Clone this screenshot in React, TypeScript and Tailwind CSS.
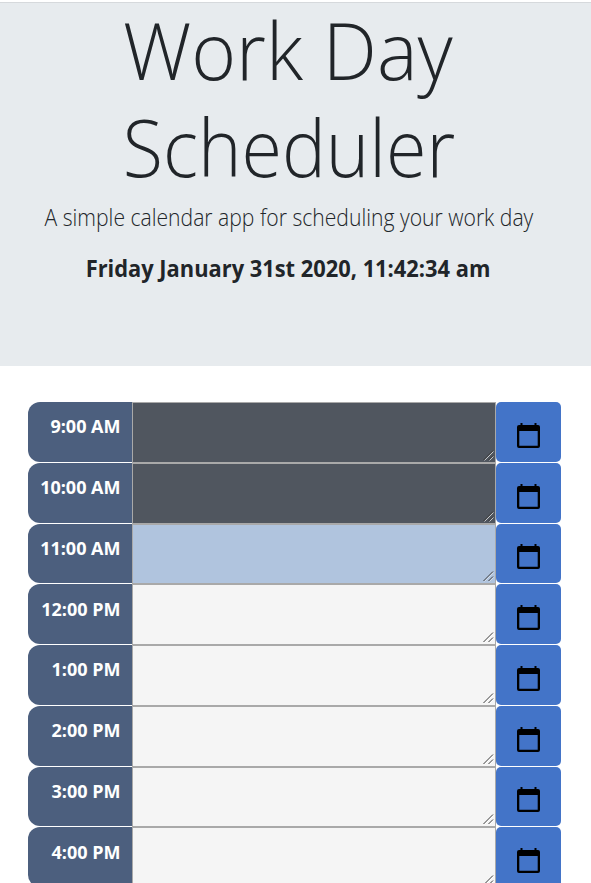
const hours = [
  { label: "9:00 AM", tone: "bg-[#50565f]", glint: "stroke-[#c4c7ca]" },
  { label: "10:00 AM", tone: "bg-[#50565f]", glint: "stroke-[#c4c7ca]" },
  { label: "11:00 AM", tone: "bg-[#b0c4de]", glint: "stroke-[#d4dfed]" },
  { label: "12:00 PM", tone: "bg-[#f5f5f5]", glint: "stroke-white" },
  { label: "1:00 PM", tone: "bg-[#f5f5f5]", glint: "stroke-white" },
  { label: "2:00 PM", tone: "bg-[#f5f5f5]", glint: "stroke-white" },
  { label: "3:00 PM", tone: "bg-[#f5f5f5]", glint: "stroke-white" },
  { label: "4:00 PM", tone: "bg-[#f5f5f5]", glint: "stroke-white" },
];

function CalendarIcon() {
  return (
    <svg width="23" height="25" viewBox="0 0 23 25" className="block">
      <path
        fillRule="evenodd"
        d="M3.5 0h2v2h12V0h2v2h1.5a2 2 0 0 1 2 2v19a2 2 0 0 1-2 2H2a2 2 0 0 1-2-2V4a2 2 0 0 1 2-2h1.5zM2.3 8v14.8h18.4V8z"
      />
    </svg>
  );
}

function TimeBlock({ label, tone, glint }: { label: string; tone: string; glint: string }) {
  return (
    <div className="flex h-[60.75px]">
      <div className="h-[59.75px] w-[104px] rounded-l-xl bg-[#4c5f7e] pt-[12.25px] pr-[11.5px] text-right text-[18px] leading-[25px] font-bold text-white">
        <span className="inline-block origin-right">{label}</span>
      </div>
      <div className="relative h-full w-[364px]">
        <textarea className={`block size-full resize-none border border-[#a9a9a9] ${tone}`} />
        <svg width="11" height="11" viewBox="0 0 11 11" fill="none" className="absolute right-[2px] bottom-[2px]">
          <path className={glint} d="M1.5 10.5 10.5 1.5M6.5 10.5 10.5 6.5" />
          <path stroke="#3c3c3c" d="M.5 10 10 .5M5.5 10 10 5.5" />
        </svg>
      </div>
      <button className="flex h-[59.75px] w-[65px] items-start justify-center rounded-[5px] bg-[#4374c8] pt-[20.9px]">
        <CalendarIcon />
      </button>
    </div>
  );
}

export default function App() {
  return (
    <div className="h-[883px] overflow-hidden bg-white font-['Open_Sans','Noto_Sans',sans-serif] text-[#212529]">
      <header className="mt-[2px] h-[364px] border-t border-[#d6d9dc] bg-[#e7ebee] pr-[14px] text-center">
        <h1 className="-mt-[3px] text-[80px] leading-[97px] font-light">
          <span className="inline-block -translate-x-[.5px] scale-x-[.957]">Work Day</span>
          <br />
          <span className="inline-block translate-x-[.5px] scale-x-[.921]">Scheduler</span>
        </h1>
        <p className="mt-[6px] text-[23px] leading-[34px] font-light whitespace-nowrap">
          <span className="inline-block scale-x-[.919]">A simple calendar app for scheduling your work day</span>
        </p>
        <p className="mt-[17px] text-[23px] leading-[34px] font-bold whitespace-nowrap">
          <span className="inline-block scale-x-[.95]">Friday January 31st 2020, 11:42:34 am</span>
        </p>
      </header>
      <main className="pt-9 pl-7">
        {hours.map((h) => (
          <TimeBlock key={h.label} {...h} />
        ))}
      </main>
    </div>
  );
}
